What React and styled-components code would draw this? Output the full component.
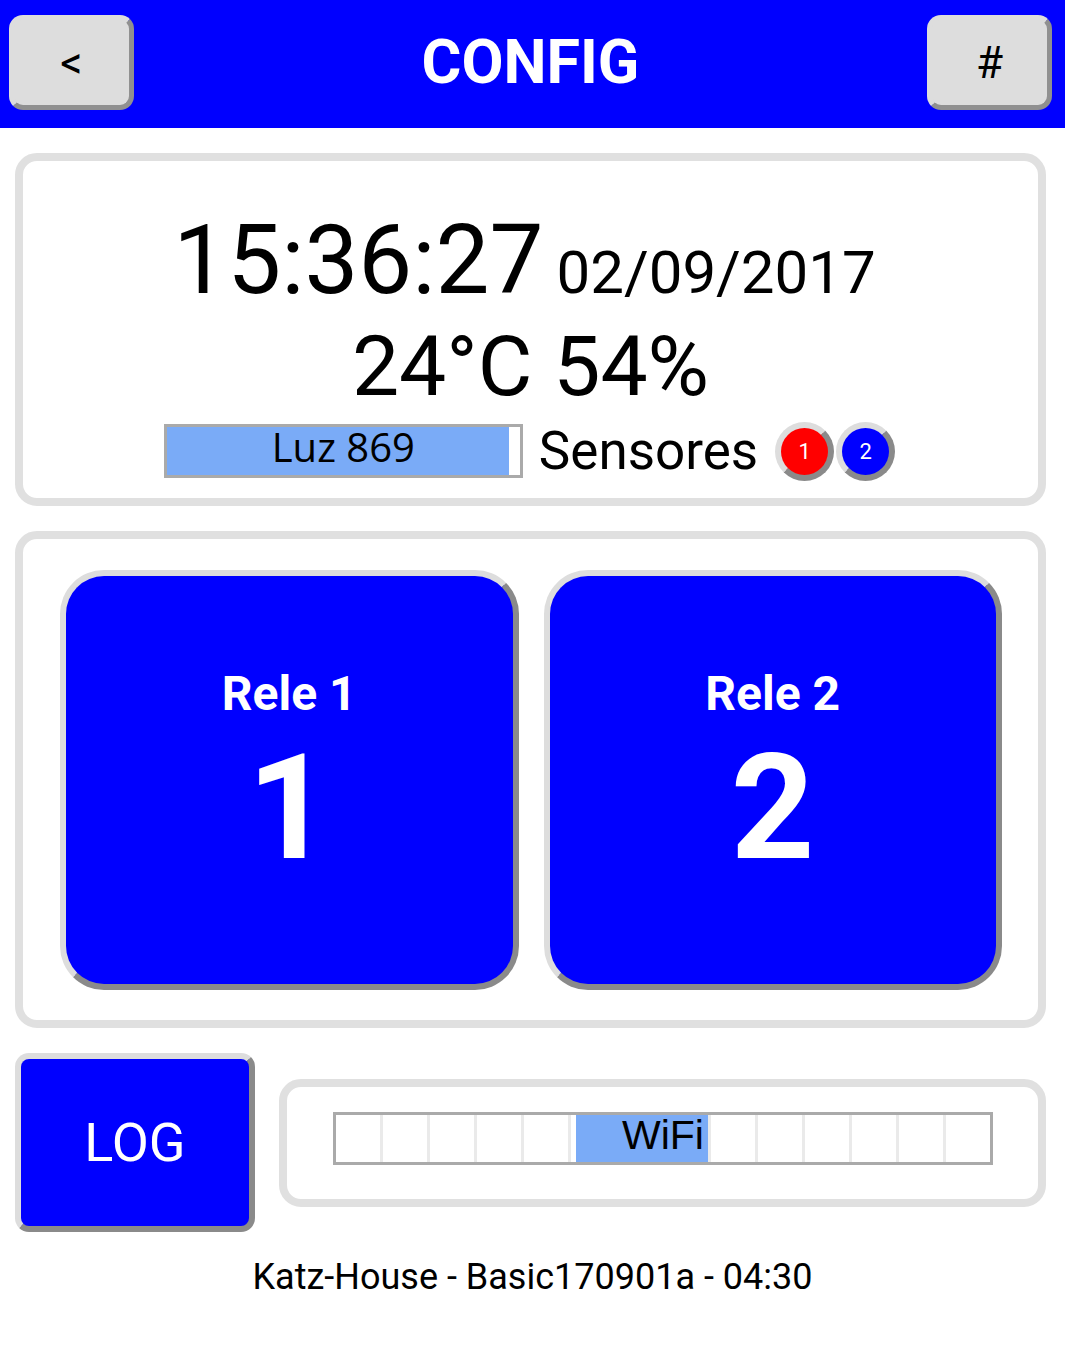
import React from "react";
import styled, { createGlobalStyle } from "styled-components";

const GlobalStyle = createGlobalStyle`
    body {
        margin: 0;
        background: #ffffff;
        font-family: Roboto, "Liberation Sans", sans-serif;
    }
`;

const Page = styled.div`
    width: 1065px;
    display: flex;
    flex-direction: column;
`;

const Header = styled.div`
    height: 128px;
    background: #0000ff;
    display: flex;
    justify-content: space-between;
    align-items: flex-start;
    padding: 15px 13px 0 9px;
    box-sizing: border-box;
`;

const TopButton = styled.div`
    width: 125px;
    height: 95px;
    box-sizing: border-box;
    background: #dddddd;
    border: 5px solid;
    border-color: #dddddd #909090 #909090 #dddddd;
    border-radius: 14px;
    display: flex;
    align-items: center;
    justify-content: center;
    font-size: 44px;
    color: #000;
`;

const Title = styled.div`
    color: #ffffff;
    font-weight: bold;
    font-size: 61px;
    line-height: 95px;
`;

const Content = styled.div`
    padding: 25px 19px 0 15px;
    display: flex;
    flex-direction: column;
    gap: 25px;
`;

const Panel = styled.div`
    border: 8px solid #e0e0e0;
    border-radius: 22px;
    box-sizing: border-box;
    height: ${(p) => p.height}px;
`;

const InfoPanel = styled(Panel)`
    display: flex;
    flex-direction: column;
    align-items: center;
    padding-top: 54px;
`;

const TimeRow = styled.div`
    display: flex;
    align-items: baseline;
    gap: 13px;
    height: 90px;
    margin-right: 12px;
`;

const Time = styled.span`
    font-size: 96px;
    line-height: 90px;
`;

const DateText = styled.span`
    font-size: 60px;
    line-height: 90px;
`;

const TempRow = styled.div`
    font-size: 84px;
    line-height: 100px;
    margin-top: 12px;
`;

const SensorRow = styled.div`
    display: flex;
    align-items: center;
    margin-top: 3px;
`;

const LuzBar = styled.div`
    position: relative;
    width: 359px;
    height: 54px;
    box-sizing: border-box;
    border: 3px solid #aaaaaa;
    background: #ffffff;
`;

const LuzFill = styled.div`
    height: 100%;
    background: #7aabf7;
`;

const BarLabel = styled.div`
    position: absolute;
    inset: 0;
    display: flex;
    align-items: center;
    justify-content: center;
    font-family: "Open Sans", "Noto Sans", sans-serif;
    font-size: 40px;
    line-height: 1;
    padding-bottom: 8px;
    box-sizing: border-box;
    color: #000;
`;

const SensorLabel = styled.span`
    font-size: 53px;
    margin-left: 16px;
    margin-right: 17px;
`;

const Dot = styled.div`
    width: 59px;
    height: 59px;
    box-sizing: border-box;
    border-radius: 50%;
    border: 6px solid;
    border-color: #dddddd #8a8a8a #8a8a8a #dddddd;
    background: ${(p) => p.color};
    color: #ffffff;
    font-size: 22px;
    display: flex;
    align-items: center;
    justify-content: center;
    margin-right: 2px;
`;

const RelayPanel = styled(Panel)`
    display: flex;
    gap: 25px;
    padding: 31px 36px 30px 37px;
`;

const RelayButton = styled.div`
    flex: 1;
    box-sizing: border-box;
    background: #0000ff;
    border: 6px solid;
    border-color: #dddddd #8a8a8a #8a8a8a #dddddd;
    border-radius: 44px;
    display: flex;
    flex-direction: column;
    align-items: center;
    color: #ffffff;
    font-weight: bold;
    padding-top: 90px;
`;

const RelayName = styled.div`
    font-size: 48px;
    line-height: 56px;
`;

const RelayNumber = styled.div`
    font-size: 146px;
    line-height: 150px;
    margin-top: 12px;
`;

const BottomRow = styled.div`
    display: flex;
    align-items: center;
    gap: 24px;
`;

const LogButton = styled.div`
    width: 240px;
    height: 179px;
    box-sizing: border-box;
    background: #0000ff;
    border: 6px solid;
    border-color: #dddddd #8a8a8a #8a8a8a #dddddd;
    border-radius: 14px;
    color: #ffffff;
    font-size: 54px;
    display: flex;
    align-items: center;
    justify-content: center;
`;

const WifiPanel = styled(Panel)`
    flex: 1;
    padding: 25px 45px 0 46px;
`;

const WifiBar = styled.div`
    position: relative;
    height: 53px;
    box-sizing: border-box;
    border: 3px solid #aaaaaa;
    display: flex;
`;

const Cell = styled.div`
    flex: 1;
    border-left: 3px solid #eaeaea;

    &:first-child {
        border-left: none;
    }
`;

const WifiFill = styled.div`
    position: absolute;
    top: 0;
    bottom: 0;
    background: #7aabf7;
`;

const WifiLabel = styled(BarLabel)`
    font-family: "Liberation Sans", Arial, sans-serif;
    font-size: 41px;
    padding-bottom: 6px;
`;

const Footer = styled.div`
    text-align: center;
    font-size: 36px;
    margin-top: 24px;
    padding-bottom: 40px;
`;

const App = () => {
    const luz = 869;
    const wifiCells = Array.from({ length: 14 });
    return (
        <Page>
            <GlobalStyle />
            <Header>
                <TopButton>&lt;</TopButton>
                <Title>CONFIG</Title>
                <TopButton>#</TopButton>
            </Header>
            <Content>
                <InfoPanel height={353}>
                    <TimeRow>
                        <Time>15:36:27</Time>
                        <DateText>02/09/2017</DateText>
                    </TimeRow>
                    <TempRow>24°C 54%</TempRow>
                    <SensorRow>
                        <LuzBar>
                            <LuzFill style={{ width: `${(luz / 1023) * 100 * 1.14}%` }} />
                            <BarLabel>Luz {luz}</BarLabel>
                        </LuzBar>
                        <SensorLabel>Sensores</SensorLabel>
                        <Dot color="#ff0000">1</Dot>
                        <Dot color="#0000ff">2</Dot>
                    </SensorRow>
                </InfoPanel>
                <RelayPanel height={497}>
                    <RelayButton>
                        <RelayName>Rele 1</RelayName>
                        <RelayNumber>1</RelayNumber>
                    </RelayButton>
                    <RelayButton>
                        <RelayName>Rele 2</RelayName>
                        <RelayNumber>2</RelayNumber>
                    </RelayButton>
                </RelayPanel>
                <BottomRow>
                    <LogButton>LOG</LogButton>
                    <WifiPanel height={128}>
                        <WifiBar>
                            {wifiCells.map((_, i) => (
                                <Cell key={i} />
                            ))}
                            <WifiFill style={{ left: "240px", width: "132px" }} />
                            <WifiLabel>WiFi</WifiLabel>
                        </WifiBar>
                    </WifiPanel>
                </BottomRow>
            </Content>
            <Footer>Katz-House - Basic170901a - 04:30</Footer>
        </Page>
    );
};

export default App;
